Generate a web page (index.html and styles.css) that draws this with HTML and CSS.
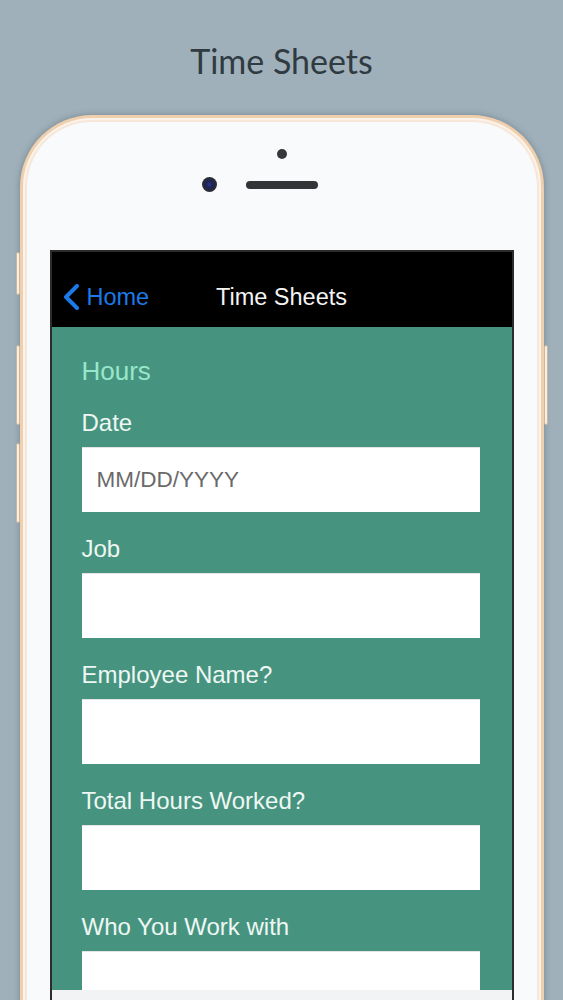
FILE: index.html
```html
<!DOCTYPE html>
<html>
<head>
<meta charset="utf-8">
<link rel="stylesheet" href="styles.css">
</head>
<body>
<h1 class="page-title">Time Sheets</h1>
<div class="phone">
  <span class="side-btn btn-l1"></span>
  <span class="side-btn btn-l2"></span>
  <span class="side-btn btn-l3"></span>
  <span class="side-btn btn-r1"></span>
  <div class="phone-top">
    <span class="sensor"></span>
    <div class="ear-row">
      <span class="camera"></span>
      <span class="speaker"></span>
      <span></span>
    </div>
  </div>
  <div class="screen">
    <div class="nav">
      <div class="back">
        <svg class="chev" width="18" height="26" viewBox="0 0 18 26"><polyline points="15,2 4,13 15,24" fill="none" stroke="#1b7ae8" stroke-width="4" stroke-linecap="round" stroke-linejoin="round"/></svg>
        <span class="back-label">Home</span>
      </div>
      <div class="nav-title">Time Sheets</div>
      <div></div>
    </div>
    <div class="content">
      <div class="section-title">Hours</div>
      <div class="field">
        <div class="label">Date</div>
        <div class="input"><span class="placeholder">MM/DD/YYYY</span></div>
      </div>
      <div class="field">
        <div class="label">Job</div>
        <div class="input"></div>
      </div>
      <div class="field">
        <div class="label">Employee Name?</div>
        <div class="input"></div>
      </div>
      <div class="field">
        <div class="label">Total Hours Worked?</div>
        <div class="input"></div>
      </div>
      <div class="field">
        <div class="label">Who You Work with</div>
        <div class="input"></div>
      </div>
    </div>
    <div class="bottom-bar"></div>
  </div>
</div>
</body>
</html>
```

FILE: styles.css
```css
html, body {
  margin: 0;
  padding: 0;
}
body {
  background: #9fb0ba;
  height: 1000px;
  overflow: hidden;
  font-family: "Liberation Sans", Arial, sans-serif;
}
.page-title {
  margin: 0;
  padding-top: 41px;
  height: 115px;
  box-sizing: border-box;
  text-align: center;
  font-family: Lato, "Open Sans", sans-serif;
  font-weight: 400;
  font-size: 34px;
  line-height: 40px;
  color: #2f3a41;
}
.phone {
  position: relative;
  width: 524px;
  height: 920px;
  margin: 0 auto;
  box-sizing: border-box;
  border: 3px solid #efcfae;
  border-bottom: none;
  border-radius: 72px 72px 0 0;
  background: #f9fafc;
  box-shadow: 0 0 6px rgba(40, 55, 65, 0.35), inset 0 0 0 2px #fbf3ea, inset 0 0 0 4px #f6e7d8;
  padding: 0 27px;
}
.side-btn {
  position: absolute;
  width: 4px;
  background: #f7efe6;
  border: 1px solid #cdb79a;
  border-radius: 2px;
  box-sizing: border-box;
}
.btn-l1 { left: -7px; top: 134px; height: 43px; }
.btn-l2 { left: -7px; top: 227px; height: 80px; }
.btn-l3 { left: -7px; top: 325px; height: 80px; }
.btn-r1 { right: -7px; top: 227px; height: 80px; }

.phone-top {
  height: 132px;
  box-sizing: border-box;
  padding-top: 31px;
  display: flex;
  flex-direction: column;
  align-items: center;
}
.sensor {
  width: 10px;
  height: 10px;
  border-radius: 50%;
  background: #36373b;
}
.ear-row {
  margin-top: 18px;
  width: 100%;
  display: grid;
  grid-template-columns: 1fr auto 1fr;
  align-items: center;
}
.camera {
  justify-self: end;
  margin-right: 28px;
  width: 15px;
  height: 15px;
  border-radius: 50%;
  background: radial-gradient(circle at 50% 50%, #2b3a8a 0, #1c2458 30%, #2a2c34 60%, #3a3b40 100%);
}
.speaker {
  width: 72px;
  height: 8px;
  border-radius: 4px;
  background: #333438;
  margin-left: 1px;
}
.screen {
  width: 464px;
  height: 785px;
  box-sizing: border-box;
  border: 2px solid #2c2c2c;
  border-bottom: none;
  display: flex;
  flex-direction: column;
  background: #46947f;
}
.nav {
  height: 75px;
  flex: none;
  box-sizing: border-box;
  padding-top: 15px;
  background: #000;
  display: grid;
  grid-template-columns: 1fr auto 1fr;
  align-items: center;
}
.back {
  display: flex;
  align-items: center;
  padding-left: 10px;
  gap: 7px;
}
.chev { display: block; }
.back-label {
  color: #1b7ae8;
  font-size: 23.5px;
}
.nav-title {
  color: #f3f3f3;
  font-size: 23.5px;
}
.content {
  height: 663px;
  flex: none;
  overflow: hidden;
  box-sizing: border-box;
  padding: 29px 32px 0 30px;
  background: #46947f;
}
.section-title {
  color: #97e7ca;
  font-size: 26px;
  line-height: 30px;
  margin-bottom: 23px;
}
.field {
  margin-bottom: 23px;
}
.label {
  color: #eef7f3;
  font-size: 24px;
  line-height: 28px;
  margin-bottom: 10px;
}
.input {
  height: 65px;
  background: #ffffff;
  border-top: 1px solid #e4e4e4;
  box-sizing: border-box;
  display: flex;
  align-items: center;
  padding-left: 15px;
}
.placeholder {
  color: #6a6a6a;
  font-size: 22.5px;
}
.bottom-bar {
  flex: 1;
  background: #f2f3f5;
}
```
